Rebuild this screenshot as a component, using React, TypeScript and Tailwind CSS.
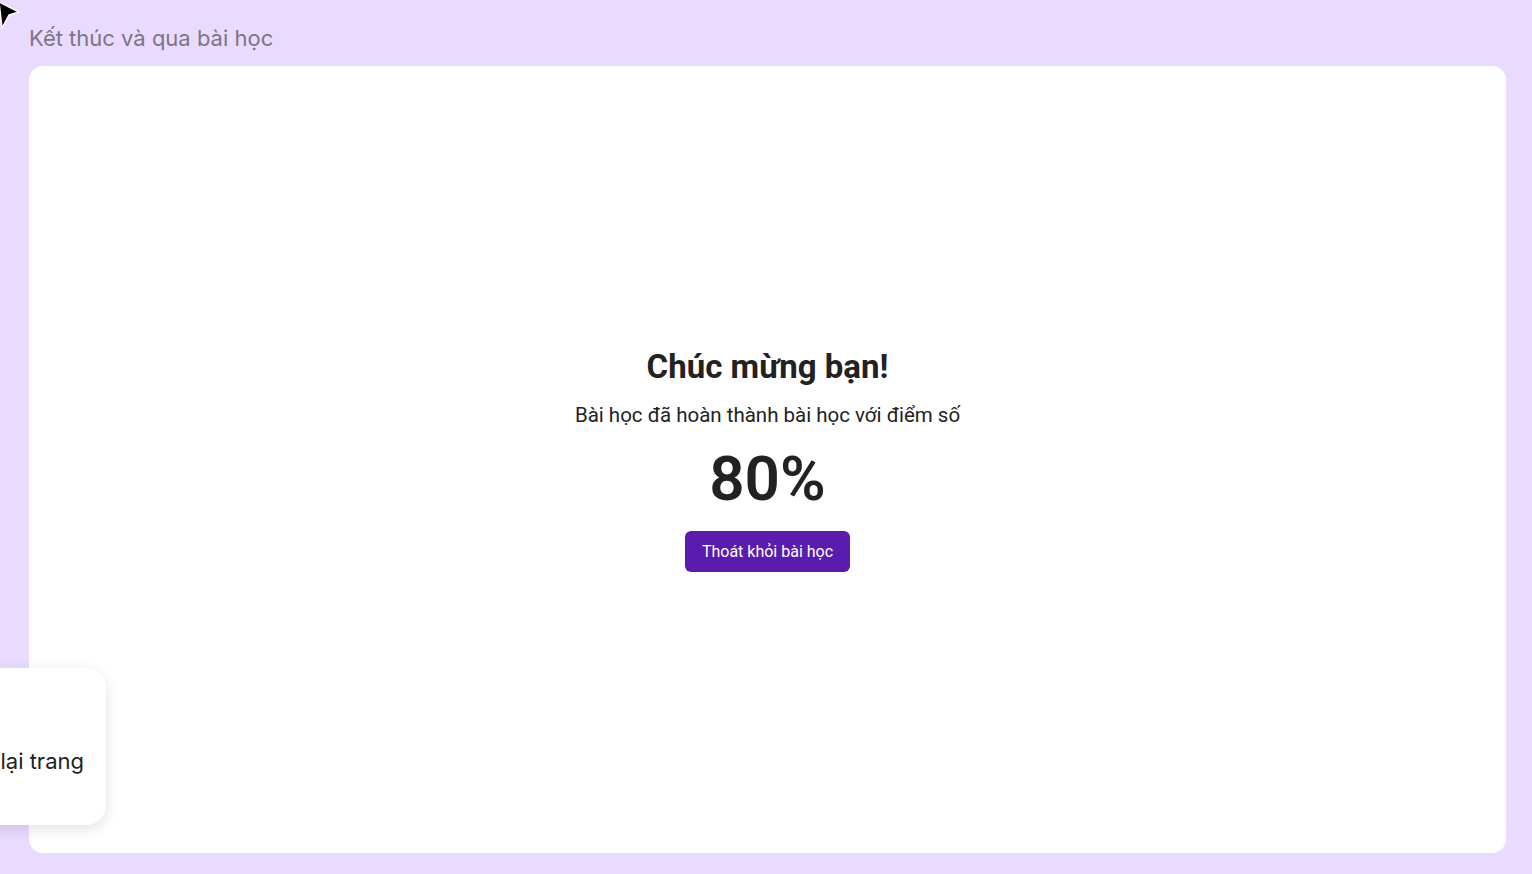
export default function App() {
  return (
    <div className="relative h-[874px] w-full overflow-hidden bg-[#e9dbff] flex flex-col pl-[29px] pr-[26px] pb-[21px]">
      {/* mouse pointer */}
      <svg className="absolute left-[-4px] top-[-2px]" width="26" height="36" viewBox="0 0 26 36">
        <path d="M3 4 L23 14 L13 17 L6 30 Z" fill="#000" stroke="#fff" strokeWidth="1.5" strokeLinejoin="round" />
      </svg>

      <h2 className="pt-[24px] pb-[13px] text-[22px] leading-[29px] text-[#7b7584] font-['Inter',sans-serif]">
        Kết thúc và qua bài học
      </h2>

      <main className="flex-1 rounded-[14px] bg-white flex items-center justify-center font-['Roboto',sans-serif]">
        <div className="flex flex-col items-center text-[#222222]">
          <h1 className="text-[33px] leading-[40px] font-bold">Chúc mừng bạn!</h1>
          <p className="mt-[15px] text-[20.5px] leading-[26px]">Bài học đã hoàn thành bài học với điểm số</p>
          <div className="mt-[16px] text-[62px] leading-[70px] font-semibold">80%</div>
          <button className="mt-[17px] h-[41px] px-[17px] rounded-[6px] bg-[#5a1cae] text-white text-[16px]">
            Thoát khỏi bài học
          </button>
        </div>
      </main>

      {/* reload popup peeking in from the left edge */}
      <div className="absolute left-[-80px] top-[668px] w-[186px] h-[157px] rounded-[20px] bg-white shadow-[0_4px_14px_rgba(0,0,0,0.12)] flex items-end justify-end pr-[22px] pb-[50px]">
        <span className="text-[22px] leading-[28px] text-[#222222] font-['Inter',sans-serif]">Tải lại trang</span>
      </div>
    </div>
  );
}
